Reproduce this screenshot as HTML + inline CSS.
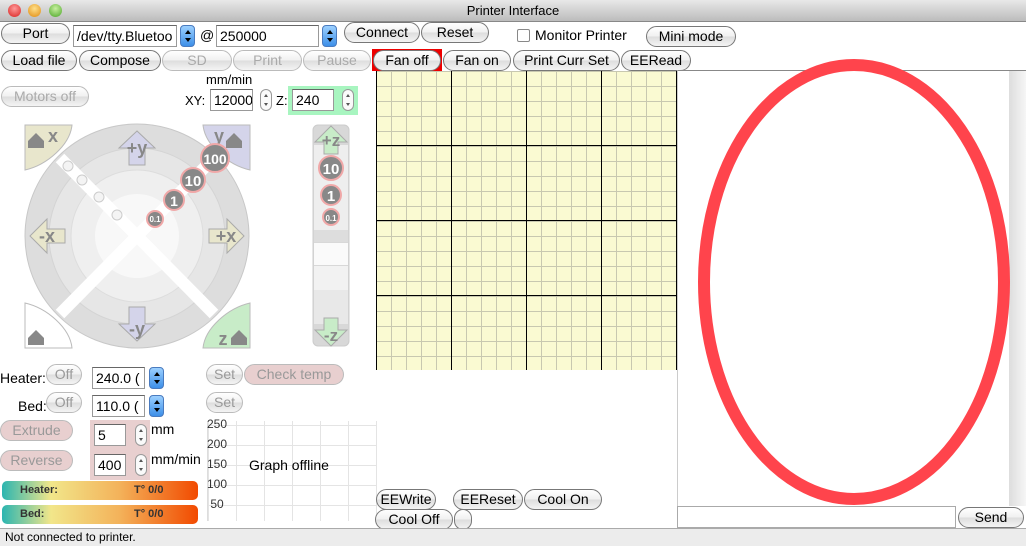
<!DOCTYPE html>
<html><head><meta charset="utf-8"><style>
*{box-sizing:border-box}
body{margin:0;width:1026px;height:546px;overflow:hidden;background:#fff;font-family:"Liberation Sans",sans-serif;font-size:13px;position:relative;color:#000}
.a{position:absolute}
.tb{left:0;top:0;width:1026px;height:22px;background:linear-gradient(#e8e8e8,#bcbcbc);border-bottom:1px solid #888;text-align:center;line-height:22px;font-size:13px}
.dot{width:13px;height:13px;border-radius:50%;top:4px}
.btn{position:absolute;height:21px;border:1px solid #777;border-radius:11px;background:linear-gradient(#fff,#f0f0f0 50%,#ddd 51%,#f4f4f4);text-align:center;line-height:19px;font-size:14px}
.dis{color:#aaa;border-color:#bbb}
.pink{background:#e8cfcf}
.inp{position:absolute;height:22px;border:1px solid #999;border-top-color:#666;background:#fff;line-height:20px;padding-left:3px;font-size:14px;overflow:hidden;white-space:nowrap}
.sp{position:absolute;width:15px;height:22px;border-radius:4px;background:linear-gradient(#9cd0ff,#3d8fe8);border:1px solid #4a7bbf}
.sp:before{content:"";position:absolute;left:4px;top:4px;border:3px solid transparent;border-bottom:4px solid #000;border-top:0}
.sp:after{content:"";position:absolute;left:4px;top:12px;border:3px solid transparent;border-top:4px solid #000;border-bottom:0}
.st{position:absolute;width:12px;height:22px;border-radius:6px;border:1px solid #999;background:#fafafa}
.st:before{content:"";position:absolute;left:3px;top:4px;border:2px solid transparent;border-bottom:3px solid #555;border-top:0}
.st:after{content:"";position:absolute;left:3px;top:13px;border:2px solid transparent;border-top:3px solid #555;border-bottom:0}
.bar{position:absolute;left:2px;width:196px;height:19px;border-radius:5px;background:linear-gradient(90deg,#2bb5b0,#f2e68a 25%,#f3b25a 60%,#f24a00);font-size:11px;line-height:19px;font-weight:bold;color:#333}
</style></head><body>
<div class="a tb">Printer Interface</div>
<div class="a dot" style="left:8px;background:radial-gradient(circle at 50% 35%,#ff9a9a,#d8201e)"></div>
<div class="a dot" style="left:28px;background:radial-gradient(circle at 50% 35%,#ffe08a,#e08a10)"></div>
<div class="a dot" style="left:49px;background:radial-gradient(circle at 50% 35%,#c8f0a0,#4aa526)"></div>

<div class="btn" style="left:1px;top:23px;width:69px">Port</div>
<div class="inp" style="left:73px;top:25px;width:104px">/dev/tty.Bluetoo</div>
<div class="sp" style="left:180px;top:25px"></div>
<div class="a" style="left:200px;top:27px;font-size:14px">@</div>
<div class="inp" style="left:216px;top:25px;width:103px">250000</div>
<div class="sp" style="left:322px;top:25px"></div>
<div class="btn" style="left:344px;top:22px;width:76px">Connect</div>
<div class="btn" style="left:421px;top:22px;width:68px">Reset</div>
<div class="a" style="left:517px;top:29px;width:13px;height:13px;border:1px solid #888;border-radius:2px;background:#fff"></div>
<div class="a" style="left:535px;top:27px;font-size:14px">Monitor Printer</div>
<div class="btn" style="left:646px;top:26px;width:90px">Mini mode</div>

<div class="btn" style="left:1px;top:50px;width:76px">Load file</div>
<div class="btn" style="left:79px;top:50px;width:82px">Compose</div>
<div class="btn dis" style="left:162px;top:50px;width:70px">SD</div>
<div class="btn dis" style="left:233px;top:50px;width:69px">Print</div>
<div class="btn dis" style="left:303px;top:50px;width:68px">Pause</div>
<div class="a" style="left:372px;top:49px;width:70px;height:22px;background:#e00"></div>
<div class="btn" style="left:373px;top:50px;width:68px">Fan off</div>
<div class="btn" style="left:443px;top:50px;width:68px">Fan on</div>
<div class="btn" style="left:513px;top:50px;width:107px">Print Curr Set</div>
<div class="btn" style="left:621px;top:50px;width:70px">EERead</div>

<div class="a" style="left:206px;top:72px;font-size:13px">mm/min</div>
<div class="btn dis" style="left:1px;top:86px;width:88px">Motors off</div>
<div class="a" style="left:185px;top:93px">XY:</div>
<div class="inp" style="left:210px;top:89px;width:43px">12000</div>
<div class="st" style="left:260px;top:89px"></div>
<div class="a" style="left:276px;top:93px">Z:</div>
<div class="a" style="left:288px;top:86px;width:70px;height:29px;background:#a8f5c0"></div>
<div class="inp" style="left:292px;top:89px;width:42px">240</div>
<div class="st" style="left:342px;top:89px"></div>

<svg class="a" style="left:0;top:110px" width="370" height="250" viewBox="0 0 370 250">
<circle cx="137" cy="126" r="112" fill="#ddd" stroke="#c8c8c8"/>
<circle cx="137" cy="126" r="88" fill="#e6e6e6" stroke="#d4d4d4"/>
<circle cx="137" cy="126" r="66" fill="#efefef" stroke="#ddd"/>
<circle cx="137" cy="126" r="42" fill="#f8f8f8"/>
<line x1="60" y1="48" x2="214" y2="204" stroke="#fff" stroke-width="12"/>
<line x1="214" y1="48" x2="60" y2="204" stroke="#fff" stroke-width="12"/>
<g fill="#f4f4f4" stroke="#ccc"><circle cx="68" cy="56" r="5"/><circle cx="82" cy="70" r="5"/><circle cx="99" cy="87" r="5"/><circle cx="117" cy="105" r="5"/></g>
<path d="M25 15h47c-2 20-25 40-47 45z" fill="#e8e6cc" stroke="#bbb"/>
<path d="M250 15h-47c2 20 25 40 47 45z" fill="#d4d4ea" stroke="#bbb"/>
<path d="M25 238h47c-2-20-25-40-47-45z" fill="#fff" stroke="#bbb"/>
<path d="M250 238h-47c2-20 25-40 47-45z" fill="#c8ecc8" stroke="#bbb"/>
<path d="M137 21l-18 17h10v17h16v-17h10z" fill="#d4d4ea" stroke="#aaa"/>
<path d="M137 231l-18-17h10v-17h16v17h10z" fill="#d4d4ea" stroke="#aaa"/>
<path d="M30 126l17-17v10h18v14h-18v10z" fill="#e8e6cc" stroke="#aaa"/>
<path d="M244 126l-17-17v10h-18v14h18v10z" fill="#e8e6cc" stroke="#aaa"/>
<g font-family="Liberation Sans" font-weight="bold" fill="#888" font-size="18" text-anchor="middle">
<text x="137" y="44">+y</text><text x="137" y="225">-y</text><text x="47" y="132">-x</text><text x="226" y="132">+x</text>
<text x="53" y="32">x</text><text x="219" y="32">y</text><text x="223" y="235">z</text></g>
<g fill="#888"><path d="M28 31l8-8 8 8v7h-16z"/><path d="M226 31l8-8 8 8v7h-16z"/><path d="M28 228l8-8 8 8v7h-16z"/><path d="M231 228l8-8 8 8v7h-16z"/></g>
<g stroke="#f0a8a8" stroke-width="2" fill="#888"><circle cx="215" cy="48" r="14"/><circle cx="193" cy="70" r="12"/><circle cx="174" cy="90" r="10"/><circle cx="155" cy="109" r="8"/></g>
<g font-family="Liberation Sans" font-weight="bold" fill="#fff" text-anchor="middle"><text x="215" y="54" font-size="14">100</text><text x="193" y="76" font-size="15">10</text><text x="174" y="96" font-size="14">1</text><text x="155" y="112" font-size="8">0.1</text></g>
<rect x="313" y="15" width="36" height="221" rx="5" fill="#d8d8d8" stroke="#ccc"/>
<rect x="314" y="35" width="34" height="85" fill="#eee"/><rect x="314" y="120" width="34" height="12" fill="#ddd"/>
<rect x="314" y="133" width="34" height="22" fill="#fafafa"/><rect x="314" y="156" width="34" height="24" fill="#f2f2f2"/><rect x="314" y="180" width="34" height="34" fill="#e8e8e8"/>
<path d="M331 16l-16 16h9v12h14v-12h9z" fill="#c8ecc8" stroke="#aaa"/>
<path d="M331 236l-16-16h9v-12h14v12h9z" fill="#c8ecc8" stroke="#aaa"/>
<g font-family="Liberation Sans" font-weight="bold" fill="#888" font-size="17" text-anchor="middle"><text x="331" y="36">+z</text><text x="331" y="231">-z</text></g>
<g stroke="#f0a8a8" stroke-width="2" fill="#888"><circle cx="331" cy="58" r="12"/><circle cx="331" cy="85" r="10"/><circle cx="331" cy="107" r="8"/></g>
<g font-family="Liberation Sans" font-weight="bold" fill="#fff" text-anchor="middle"><text x="331" y="64" font-size="15">10</text><text x="331" y="91" font-size="15">1</text><text x="331" y="111" font-size="8">0.1</text></g>
</svg>

<div class="a" style="left:376px;top:71px;width:301px;height:299px;background-color:#fafad2;background-image:linear-gradient(90deg,#000 1px,transparent 1px),linear-gradient(#000 1px,transparent 1px),linear-gradient(90deg,#c8c8b0 1px,transparent 1px),linear-gradient(#c8c8b0 1px,transparent 1px);background-size:75px 75px,75px 75px,15px 15px,15px 15px;background-position:0 0,0 -1px,0 0,0 0"></div>

<div class="a" style="left:0;top:370px;font-size:14px">Heater:</div>
<div class="btn dis" style="left:46px;top:364px;width:36px;color:#999">Off</div>
<div class="inp" style="left:92px;top:367px;width:53px">240.0 (</div>
<div class="sp" style="left:149px;top:367px"></div>
<div class="a" style="left:18px;top:398px;font-size:14px">Bed:</div>
<div class="btn dis" style="left:46px;top:392px;width:36px;color:#999">Off</div>
<div class="inp" style="left:92px;top:395px;width:53px">110.0 (</div>
<div class="sp" style="left:149px;top:395px"></div>
<div class="btn dis" style="left:206px;top:364px;width:37px;color:#999">Set</div>
<div class="btn dis pink" style="left:244px;top:364px;width:100px;color:#999">Check temp</div>
<div class="btn dis" style="left:206px;top:392px;width:37px;color:#999">Set</div>
<div class="btn dis pink" style="left:0;top:420px;width:73px;color:#999">Extrude</div>
<div class="btn dis pink" style="left:0;top:450px;width:73px;color:#999">Reverse</div>
<div class="a" style="left:90px;top:420px;width:60px;height:60px;background:#e8cfcf"></div>
<div class="inp" style="left:94px;top:424px;width:32px">5</div>
<div class="st" style="left:135px;top:424px"></div>
<div class="inp" style="left:94px;top:454px;width:32px">400</div>
<div class="st" style="left:135px;top:454px"></div>
<div class="a" style="left:151px;top:421px;font-size:14px">mm</div>
<div class="a" style="left:151px;top:451px;font-size:14px">mm/min</div>

<div class="a" style="left:207px;top:421px;width:170px;height:100px;border-left:1px solid #ddd;background-image:linear-gradient(90deg,#e4e4e4 1px,transparent 1px),linear-gradient(#e4e4e4 1px,transparent 1px);background-size:28px 20px;background-position:0 0,0 4px"></div>
<div class="a" style="left:207px;top:414px;font-size:12px;color:#333;line-height:20px">250<br>200<br>150<br>100<br>&nbsp;50</div>
<div class="a" style="left:249px;top:457px;font-size:14px">Graph offline</div>

<div class="bar" style="top:481px"><span style="position:absolute;left:18px">Heater:</span><span style="position:absolute;left:132px">T° 0/0</span></div>
<div class="bar" style="top:505px"><span style="position:absolute;left:18px">Bed:</span><span style="position:absolute;left:132px">T° 0/0</span></div>

<div class="a" style="left:677px;top:70px;width:349px;height:436px;border-top:1px solid #888;border-left:1px solid #ccc;background:#fff"></div>
<div class="a" style="left:1009px;top:71px;width:17px;height:435px;background:linear-gradient(90deg,#ddd,#f6f6f6)"></div>
<svg class="a" style="left:677px;top:50px" width="340" height="460"><ellipse cx="177" cy="232" rx="150" ry="217" fill="none" stroke="#ff444c" stroke-width="12"/></svg>

<div class="btn" style="left:376px;top:489px;width:60px">EEWrite</div>
<div class="btn" style="left:453px;top:489px;width:70px">EEReset</div>
<div class="btn" style="left:524px;top:489px;width:78px">Cool On</div>
<div class="btn" style="left:375px;top:509px;width:78px">Cool Off</div>
<div class="btn" style="left:454px;top:509px;width:18px"></div>

<div class="a" style="left:677px;top:506px;width:279px;height:22px;border:1px solid #aaa;background:#fff"></div>
<div class="btn" style="left:958px;top:507px;width:66px">Send</div>

<div class="a" style="left:0;top:528px;width:1026px;height:18px;background:#ececec;border-top:1px solid #aaa;font-size:12px;line-height:16px;padding-left:5px">Not connected to printer.</div>
</body></html>
